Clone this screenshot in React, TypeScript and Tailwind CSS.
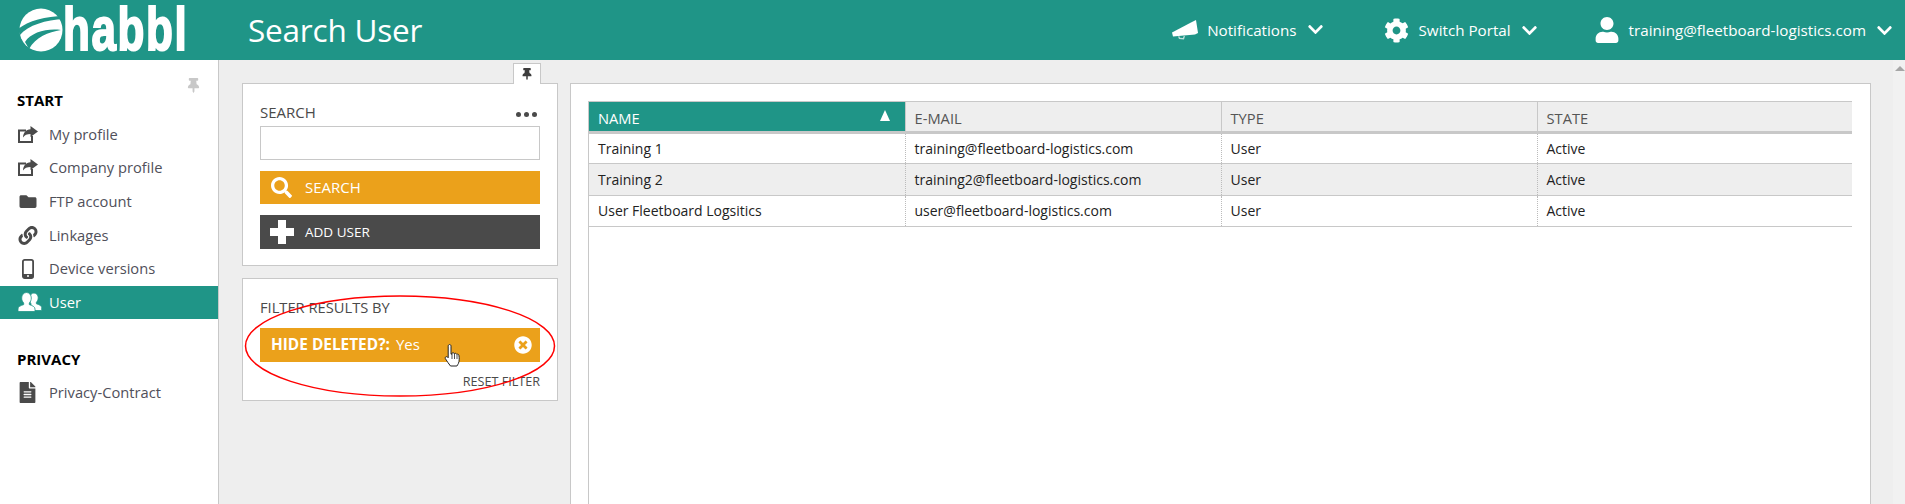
import { FaFolder, FaLink, FaFileAlt, FaSearch, FaCog, FaUser, FaChevronDown, FaThumbtack, FaTimesCircle } from 'react-icons/fa'
import { ReactNode } from 'react'

const FONT = "font-['Open_Sans',sans-serif]"

function Logo() {
  return (
    <div className="flex w-[248px] shrink-0 items-center pl-[18px]">
      <svg width="46" height="44" viewBox="0 0 46 44" className="shrink-0">
        <circle cx="23" cy="22" r="21.5" fill="#fff" />
        <path d="M0 21C10 13 28 8 46 8L46 11C28 12 10 17 2 27Z" fill="#1f9587" />
        <path d="M7 34C13 24 30 20 43 22C30 24 18 29 11 41Z" fill="#1f9587" />
      </svg>
      <span className="-ml-[1px] -translate-y-[1px] scale-y-[1.38] font-['Liberation_Sans',sans-serif] text-[44px] leading-[44px] font-bold tracking-[1.6px] whitespace-nowrap text-white [-webkit-text-stroke:1.5px_white]">
        habbl
      </span>
    </div>
  )
}

function ShareIcon() {
  return (
    <svg width="20" height="17" viewBox="0 0 20 17">
      <path d="M1 4.500h7M1 3.500v12.500h13v-6" fill="none" stroke="#4a4a4a" strokeWidth="2" />
      <path d="M12.500 0L20 5.500l-7.500 5.500V8C9 8 6.500 9 5 11.500 5 7 8 3.500 12.500 3.200z" fill="#4a4a4a" />
    </svg>
  )
}

function BullhornIcon() {
  return (
    <svg width="26" height="20" viewBox="0 0 26 20" fill="#fff">
      <path d="M0 12.500L19 2.500l5-2.500 2 13-3 1.500-22 2z" />
      <path d="M6 16.500l1 2.500 5 .5 1-3.500-1.500.2-.5 1.800-3-.3-.6-1.400z" opacity="0.7" />
    </svg>
  )
}

function UsersIcon() {
  return (
    <svg width="24" height="20" viewBox="0 0 24 20" fill="#fff" stroke="#1f9587" strokeWidth="0.8">
      <path d="M16 1c2.600 0 4.200 2.200 4.200 4.800 0 1.800-.7 3.400-1.800 4.400v1.600c2.500.8 5.300 1.800 5.300 3.800v2.900H13V11.800c-1-1.200-1.500-3.500-1.200-6C12 3 13.500 1 16 1z" />
      <path d="M8.500 0.500c3 0 4.800 2.500 4.800 5.500 0 2-.8 3.800-2 5v1.600c3 1 5.700 2 5.700 4.400v2.500H0v-2.500c0-2.400 2.700-3.400 5.700-4.400V11c-1.200-1.200-2-3-2-5 0-3 1.800-5.500 4.800-5.500z" />
    </svg>
  )
}

function PhoneIcon() {
  return (
    <svg width="12" height="20" viewBox="0 0 12 20">
      <rect x="0.900" y="0.900" width="10.200" height="18.200" rx="1.800" fill="none" stroke="#4a4a4a" strokeWidth="1.800" />
      <rect x="1" y="15" width="10" height="4" fill="#4a4a4a" />
      <circle cx="6" cy="17" r="1" fill="#fff" />
    </svg>
  )
}

function SideHeading({ label }: { label: string }) {
  return <div className="h-[57px] pt-[29px] pl-[17px] text-[15px] leading-[22px] font-bold text-black">{label}</div>
}

function SideItem({ icon, label, active }: { icon: ReactNode; label: string; active?: boolean }) {
  return (
    <div className={`flex h-[33.6px] items-center pl-[18px] text-[14.7px] ${active ? 'bg-[#1f9587] text-white' : 'text-[#50505a]'}`}>
      <span className="flex w-[31px] shrink-0 items-center text-[#4a4a4a]">{icon}</span>
      <span className="-mt-[1px]">{label}</span>
    </div>
  )
}

function HeaderLink({ icon, label, iconGap, className }: { icon: ReactNode; label: string; iconGap: string; className: string }) {
  return (
    <div className={`flex items-center text-[15.2px] text-white ${className}`}>
      <span className={`flex items-center ${iconGap}`}>{icon}</span>
      <span>{label}</span>
      <FaChevronDown className="ml-[10px] h-[17px] w-[17px]" />
    </div>
  )
}

const rows = [
  { name: 'Training 1', email: 'training@fleetboard-logistics.com', striped: false },
  { name: 'Training 2', email: 'training2@fleetboard-logistics.com', striped: true },
  { name: 'User Fleetboard Logsitics', email: 'user@fleetboard-logistics.com', striped: false },
]

export default function App() {
  return (
    <div className={`flex h-[504px] w-[1905px] flex-col overflow-hidden bg-[#eeeeee] ${FONT}`}>
      {/* Header */}
      <header className="flex h-[60px] shrink-0 items-center bg-[#1f9587]">
        <Logo />
        <h1 className="text-[31.5px] font-normal tracking-[-0.2px] text-white">Search User</h1>
        <div className="ml-auto flex items-center pr-[12px]">
          <HeaderLink icon={<BullhornIcon />} label="Notifications" iconGap="mr-[9px]" className="" />
          <HeaderLink icon={<FaCog className="h-[25px] w-[25px]" />} label="Switch Portal" iconGap="mr-[10px]" className="ml-[60px]" />
          <HeaderLink icon={<FaUser className="h-[26px] w-[26px]" />} label="training@fleetboard-logistics.com" iconGap="mr-[9px]" className="ml-[56px]" />
        </div>
      </header>

      <div className="flex min-h-0 flex-1">
        {/* Sidebar */}
        <aside className="relative w-[219px] shrink-0 border-r border-[#c8c8c8] bg-white">
          <FaThumbtack className="absolute top-[18px] left-[187px] h-[15px] w-[13px] text-[#c8c8c8]" />
          <SideHeading label="START" />
          <div className="pt-[0.6px]">
            <SideItem icon={<ShareIcon />} label="My profile" />
            <SideItem icon={<ShareIcon />} label="Company profile" />
            <SideItem icon={<FaFolder className="h-[17px] w-[20px]" />} label="FTP account" />
            <SideItem icon={<FaLink className="h-[19px] w-[20px]" />} label="Linkages" />
            <SideItem icon={<span className="pl-[4px]"><PhoneIcon /></span>} label="Device versions" />
            <SideItem icon={<UsersIcon />} label="User" active />
          </div>
          <SideHeading label="PRIVACY" />
          <SideItem icon={<FaFileAlt className="ml-[1px] h-[21px] w-[17px]" />} label="Privacy-Contract" />
        </aside>

        {/* Content */}
        <main className="flex min-w-0 flex-1 items-start pt-[23px] pl-[23px]">
          <div className="relative flex w-[316px] shrink-0 flex-col gap-[12px]">
            <div className="absolute -top-[20px] right-[17px] flex h-[21px] w-[28px] items-center justify-center border border-b-0 border-[#c8c8c8] bg-white">
              <FaThumbtack className="h-[12px] w-[10px] text-[#3d3d3d]" />
            </div>
            <section className="flex h-[183px] flex-col border border-[#c8c8c8] bg-white px-[17px] text-[#4a4a4a]">
              <div className="flex h-[42px] items-end justify-between pb-[5px] text-[15px] leading-[18px]">
                <span>SEARCH</span>
                <span className="mr-[3px] mb-[4px] flex gap-[3px]">
                  <span className="h-[5px] w-[5px] rounded-full bg-[#4a4a4a]" />
                  <span className="h-[5px] w-[5px] rounded-full bg-[#4a4a4a]" />
                  <span className="h-[5px] w-[5px] rounded-full bg-[#4a4a4a]" />
                </span>
              </div>
              <div className="h-[34px] border border-[#c8c8c8] bg-white" />
              <button className="mt-[11px] flex h-[33px] items-center bg-[#eba11b] pl-[11px] text-[15px] text-white">
                <FaSearch className="h-[21px] w-[21px]" />
                <span className="ml-[13px]">SEARCH</span>
              </button>
              <button className="mt-[11px] flex h-[34px] items-center bg-[#4a4a4a] pl-[10px] text-[13.5px] text-white">
                <svg width="24" height="24" viewBox="0 0 24 24" fill="#fff"><path d="M8 0h8v8h8v8h-8v8H8v-8H0V8h8z" /></svg>
                <span className="ml-[11px]">ADD USER</span>
              </button>
            </section>

            <section className="relative flex h-[123px] flex-col border border-[#c8c8c8] bg-white px-[17px] text-[#4a4a4a]">
              <div className="h-[49px] pt-[18px] text-[14.7px] leading-[20px]">FILTER RESULTS BY</div>
              <div className="flex h-[34px] items-center bg-[#eba11b] pr-[8px] pl-[11px] text-white">
                <div className="flex items-baseline">
                  <span className="text-[15.4px] font-bold">HIDE DELETED?:</span>
                  <span className="ml-[6px] text-[15px]">Yes</span>
                </div>
                <FaTimesCircle className="ml-auto h-[18px] w-[18px]" />
              </div>
              <div className="mt-[11px] text-right text-[12.6px] leading-[18px]">RESET FILTER</div>

              {/* hand-drawn ellipse */}
              <svg className="pointer-events-none absolute top-[15px] left-[1px]" width="312" height="104" viewBox="0 0 312 104" fill="none">
                <ellipse cx="156" cy="52" rx="154.500" ry="50" stroke="#ff0000" strokeWidth="1.500" />
              </svg>
              {/* mouse pointer */}
              <svg className="pointer-events-none absolute top-[64px] left-[201px]" width="18" height="25" viewBox="0 0 18 25">
                <path d="M5.500 1.500c1 0 1.500.7 1.500 1.700v8l1-.3v-.8c.8-.6 2-.4 2.300.5.800-.6 2-.4 2.300.7.800-.4 2-.1 2.300 1 .5 2.500.5 6-.5 8.200-.5 1-1 1.500-1.500 2.500H6.500C5 21 3 18.500 1.300 15.500c-.5-1.200.8-2.500 2.200-1.500l.7.700V3.200c0-1 .5-1.700 1.300-1.700z" fill="#fff" stroke="#222" strokeWidth="1" strokeLinejoin="round" />
                <path d="M8 11v5M10.500 11v5M13 12v4" stroke="#222" strokeWidth="0.800" />
              </svg>
            </section>
          </div>

          <section className="ml-[12px] flex h-[500px] min-w-0 flex-1 flex-col border border-[#c8c8c8] bg-white pt-[17px] pr-[18px] pl-[17px]">
            <div className="flex-1 border-l border-[#c8c8c8]">
              <table className="w-full table-fixed border-collapse text-[14px] text-[#222]">
                <thead>
                  <tr className="h-[31px] border-t border-b-[3px] border-[#c8c8c8] bg-[#eeeeee] text-left text-[14.7px] text-[#555]">
                    <th className="relative w-[316px] bg-[#1f9587] pt-[4px] pl-[9px] font-normal text-white">
                      NAME
                      <span className="absolute top-[8px] right-[15px] h-0 w-0 border-r-[5.5px] border-b-[11px] border-l-[5.5px] border-r-transparent border-b-white border-l-transparent" />
                    </th>
                    <th className="w-[316px] border-l border-[#c8c8c8] pt-[4px] pl-[9px] font-normal">E-MAIL</th>
                    <th className="w-[316px] border-l border-[#c8c8c8] pt-[4px] pl-[9px] font-normal">TYPE</th>
                    <th className="border-l border-[#c8c8c8] pt-[4px] pl-[9px] font-normal">STATE</th>
                  </tr>
                </thead>
                <tbody>
                  {rows.map((row) => (
                    <tr key={row.email} className={`h-[31.3px] border-b border-[#c8c8c8] ${row.striped ? 'bg-[#eeeeee]' : 'bg-white'}`}>
                      <td className="pl-[9px]">{row.name}</td>
                      <td className="border-l border-dotted border-[#bbb] pl-[9px]">{row.email}</td>
                      <td className="border-l border-dotted border-[#bbb] pl-[9px]">User</td>
                      <td className="border-l border-dotted border-[#bbb] pl-[9px]">Active</td>
                    </tr>
                  ))}
                </tbody>
              </table>
            </div>
          </section>

          <div className="-mt-[23px] ml-[22px] flex h-[444px] w-[12px] shrink-0 justify-end bg-[#f1f1f1] pt-[6px]">
            <div className="h-0 w-0 border-r-[5px] border-b-[5px] border-l-[5px] border-r-transparent border-b-[#a6a6a6] border-l-transparent" />
          </div>
        </main>
      </div>
    </div>
  )
}
